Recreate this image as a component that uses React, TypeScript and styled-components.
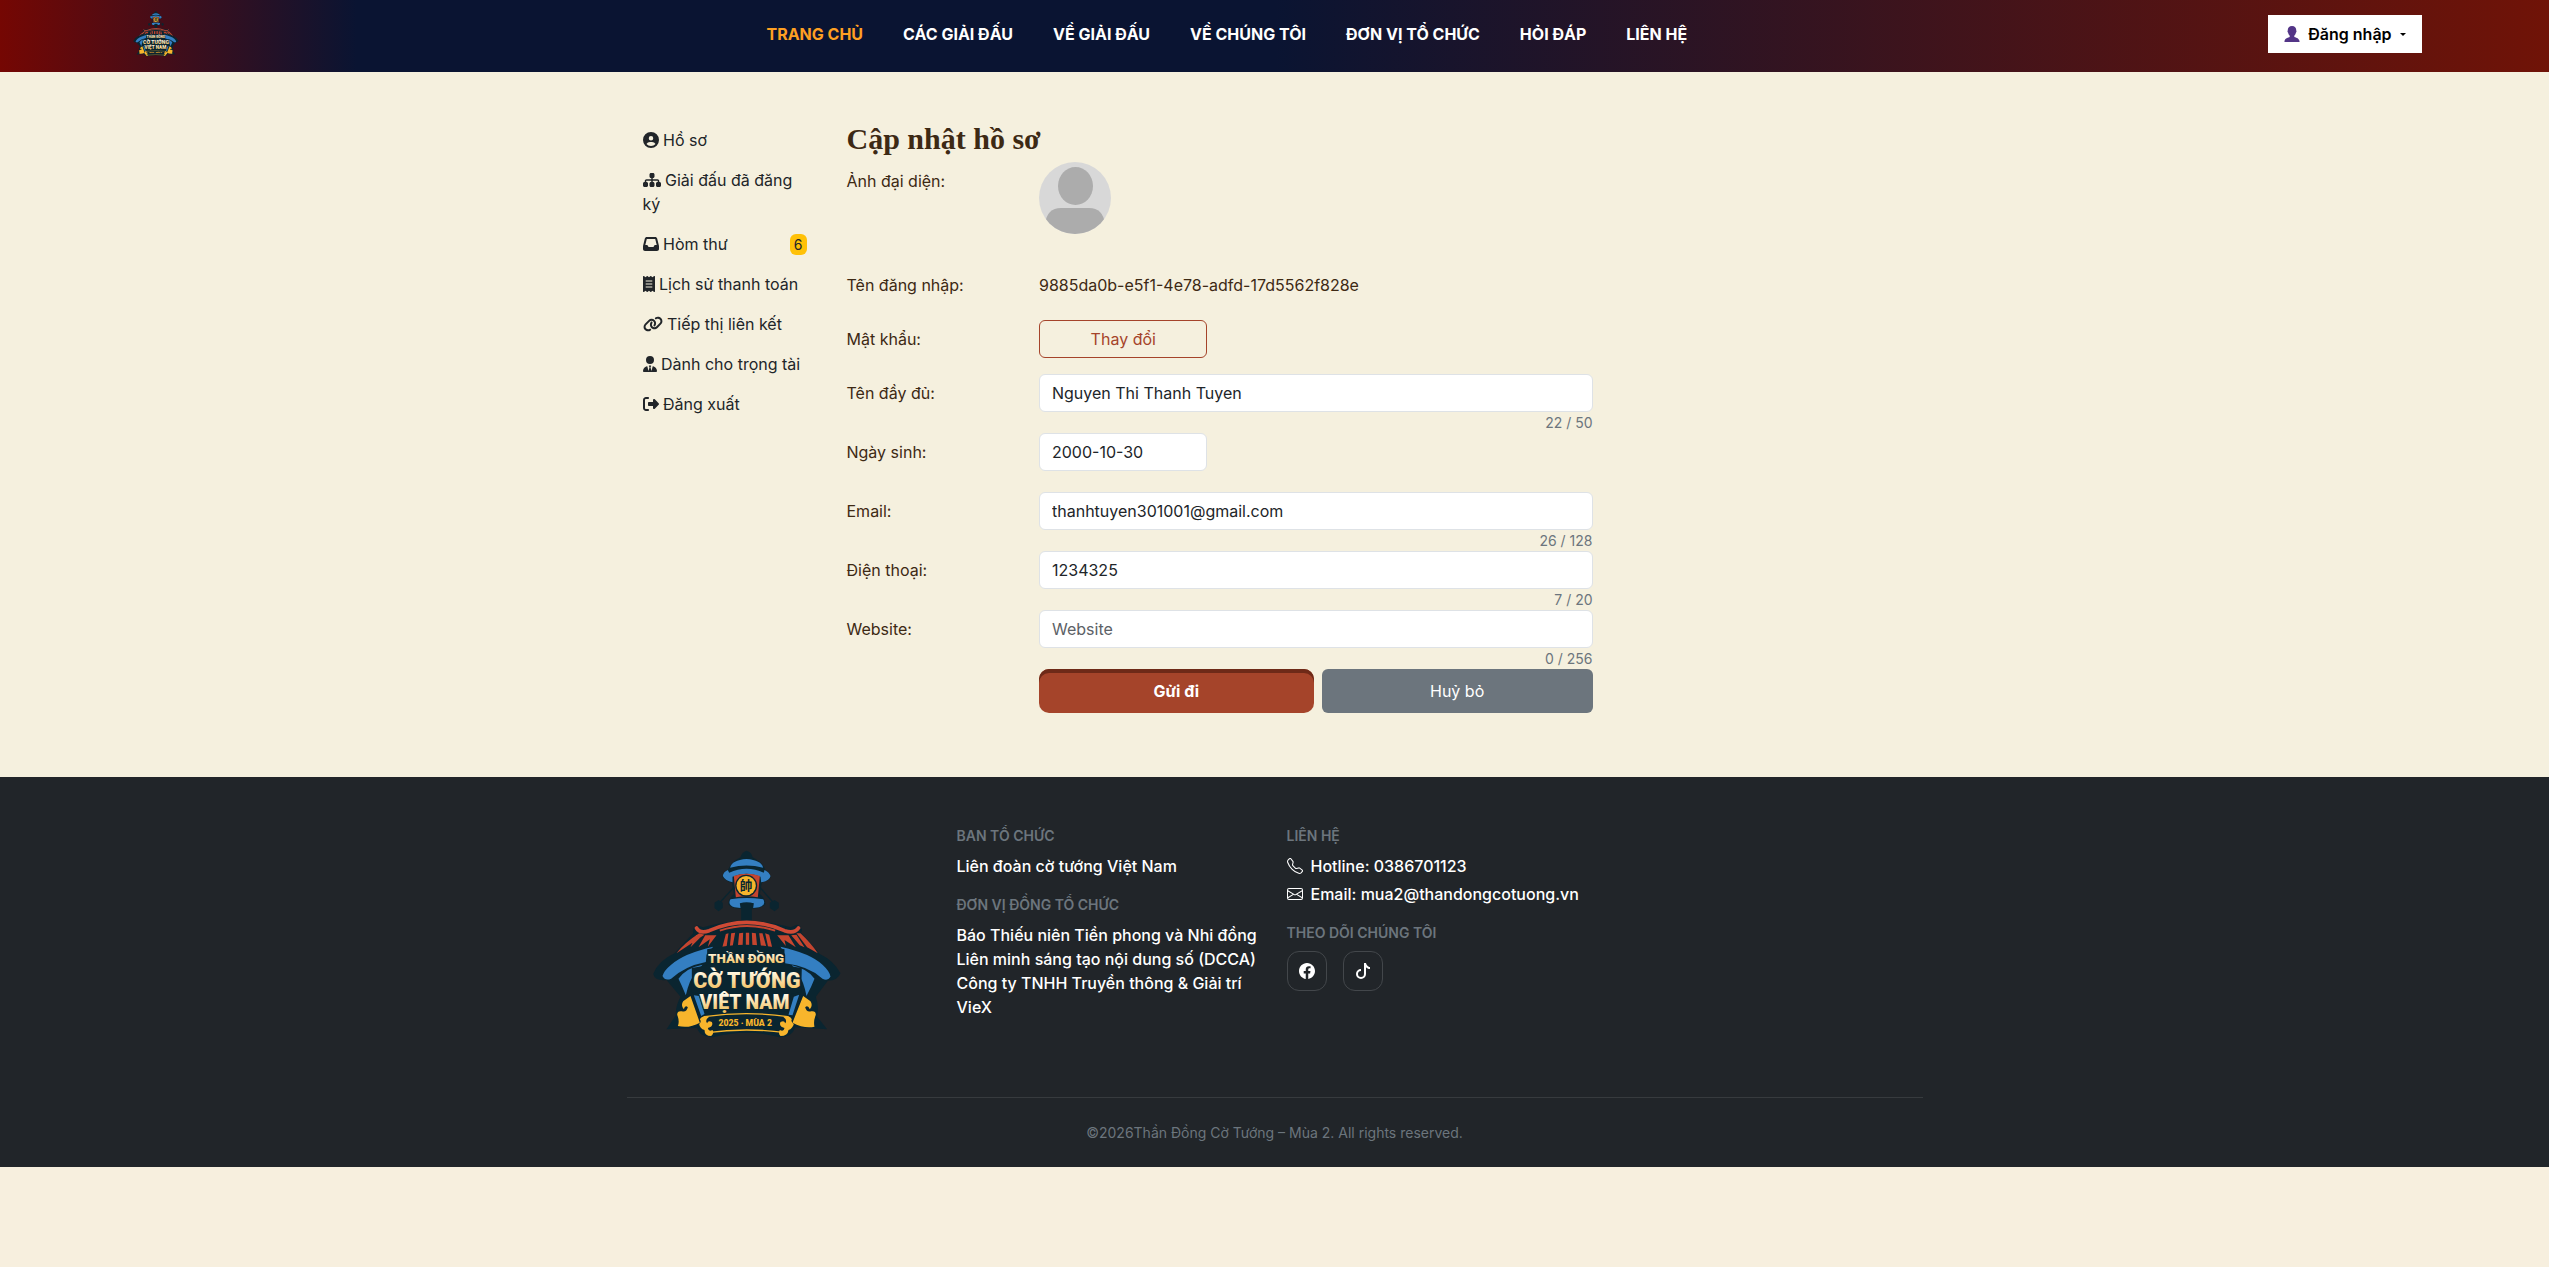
import React, { useState } from "react";
import styled, { createGlobalStyle } from "styled-components";
import {
  FaCircleUser,
  FaSitemap,
  FaInbox,
  FaReceipt,
  FaLink,
  FaUserTie,
  FaRightFromBracket,
} from "react-icons/fa6";
import { BsTelephone, BsEnvelope, BsFacebook, BsTiktok } from "react-icons/bs";

const GlobalStyle = createGlobalStyle`
  *, *::before, *::after { box-sizing: border-box; }
  body {
    margin: 0;
    background: #f7efde;
    color: #3d2914;
    font-family: Inter, "Noto Sans", sans-serif;
    font-size: 16px;
    line-height: 24px;
  }
  a { color: inherit; text-decoration: none; }
  button, input { font: inherit; }
`;

const Header = styled.header`
  display: flex;
  align-items: center;
  justify-content: space-between;
  height: 72px;
  padding: 0 5%;
  background: linear-gradient(90deg, #750703 0%, #0a1432 14%, #0a1432 50%, #701307 100%);
`;

const Brand = styled.a`
  display: flex;
`;

const HeaderBrand = styled(Brand)`
  padding-bottom: 4px;
`;

const Menu = styled.nav`
  display: flex;
  gap: 40px;
  padding-bottom: 4px;
`;

const MenuLink = styled.a<{ $active?: boolean }>`
  color: ${(p) => (p.$active ? "#ffa022" : "#fff")};
  font-size: 16px;
  font-weight: 700;
  white-space: nowrap;
`;

const LoginButton = styled.button`
  display: flex;
  align-items: center;
  gap: 8px;
  height: 38px;
  margin-bottom: 4px;
  padding: 0 16px;
  border: 0;
  background: #fff;
  color: #000;
  font-weight: 600;
`;

const Caret = styled.span`
  border: 3px solid transparent;
  border-top-color: #000;
  border-bottom: 0;
`;

const Container = styled.div`
  width: 100%;
  max-width: 1320px;
  margin: 0 auto;
  padding: 0 12px;
`;

const PageBackground = styled.div`
  background: #f5f0de;
`;

const Page = styled(Container)`
  display: grid;
  grid-template-columns: 2fr 10fr;
  padding: 48px 0 64px;
`;

const Sidebar = styled.nav`
  padding: 0 12px;
`;

const SideLink = styled.a<{ $iconWidth: number }>`
  display: block;
  padding: 8px 16px;
  color: #212529;

  svg {
    width: ${(p) => p.$iconWidth}px;
    height: 16px;
    vertical-align: -2px;
  }
`;

const Badge = styled.span`
  float: right;
  margin-top: 2px;
  padding: 0 4px;
  border-radius: 6px;
  background: #ffc107;
  font-size: 14px;
  line-height: 21px;
`;

const Content = styled.main`
  width: 70%;
  padding: 0 12px;
`;

const Title = styled.h1`
  margin: 0 0 4px;
  color: #3d2914;
  font-family: "Liberation Serif", serif;
  font-size: 30px;
  font-weight: 700;
  line-height: 38px;
`;

const Row = styled.div<{ $gap?: number }>`
  display: grid;
  grid-template-columns: 1fr 3fr;
  margin: 0 -12px ${(p) => p.$gap ?? 0}px;
`;

const Label = styled.label`
  padding: 7px 12px;
`;

const Caption = styled(Label).attrs({ as: "span" })``;

const Field = styled.div`
  min-width: 0;
  padding: 0 12px;
`;

const Plain = styled.div`
  padding: 7px 0;
`;

const Avatar = styled.svg`
  display: block;
  width: 72px;
  height: 72px;
  border-radius: 50%;
`;

const Third = styled.div`
  width: calc(33.333% - 16px);
`;

const Input = styled.input`
  display: block;
  width: 100%;
  height: 38px;
  padding: 6px 12px;
  border: 1px solid #dee2e6;
  border-radius: 6px;
  background: #fff;
  color: #212529;

  &::placeholder {
    color: #5c6166;
    opacity: 1;
  }
`;

const Counter = styled.div`
  height: 21px;
  color: #6c757d;
  font-size: 14px;
  line-height: 21px;
  text-align: right;
`;

const OutlineButton = styled.button`
  width: 100%;
  height: 38px;
  border: 1px solid #a5442a;
  border-radius: 6px;
  background: transparent;
  color: #a5442a;
`;

const Actions = styled.div`
  display: flex;
  gap: 8px;
`;

const ActionButton = styled.button<{ $primary?: boolean }>`
  flex: 1;
  height: 44px;
  padding: 0 ${(p) => (p.$primary ? 14 : 12)}px;
  border: 0;
  border-radius: ${(p) => (p.$primary ? 10 : 6)}px;
  background: ${(p) => (p.$primary ? "#a5442a" : "#6c757d")};
  box-shadow: ${(p) => (p.$primary ? "inset 0 4px 0 #6e2a18" : "none")};
  color: #fff;
  font-weight: ${(p) => (p.$primary ? 700 : 400)};
`;

const Footer = styled.footer`
  padding-top: 48px;
  background: #212529;
  color: #fff;
  font-weight: 500;
`;

const FooterColumns = styled.div`
  display: grid;
  grid-template-columns: repeat(4, 1fr);
  margin: 0 -12px;
  padding-bottom: 32px;
`;

const FooterColumn = styled.section`
  padding: 0 12px;
`;

const FooterHeading = styled.h2`
  margin: 0 0 8px;
  color: #6c757d;
  font-size: 14px;
  font-weight: 600;
  line-height: 21px;
  text-transform: uppercase;
`;

const FooterText = styled.p`
  margin: 0 0 16px;
`;

const ContactList = styled.address`
  display: grid;
  gap: 4px;
  margin-bottom: 16px;
  font-style: normal;
`;

const ContactLink = styled.a`
  display: flex;
  align-items: center;
  gap: 8px;
`;

const Socials = styled.div`
  display: flex;
  gap: 16px;
`;

const SocialLink = styled.a`
  display: flex;
  align-items: center;
  justify-content: center;
  width: 40px;
  height: 40px;
  border: 1px solid #43474b;
  border-radius: 12px;
`;

const Copyright = styled.p`
  margin: 0;
  padding: 24px 0;
  border-top: 1px solid #373b3e;
  color: #6c757d;
  font-size: 14px;
  font-weight: 400;
  line-height: 21px;
  text-align: center;
`;

const logoFont = 'Roboto, "Liberation Sans", sans-serif';

function Logo({ size }: { size: number }) {
  const id = `gold${size}`;
  return (
    <svg width={size} height={size} viewBox="0 0 240 240" role="img" aria-label="Thần Đồng Cờ Tướng Việt Nam">
      <defs>
        <linearGradient id={id} x1="0" y1="0" x2="0" y2="1">
          <stop offset="0.2" stopColor="#fff8e4" />
          <stop offset="0.9" stopColor="#f3bf5c" />
        </linearGradient>
      </defs>
      <g transform="translate(3.5 15) scale(0.33333)">
        <path
          fill="#0a2530"
          d="M348 32 Q364 36 366 52 Q398 68 406 92 Q424 102 418 118 Q400 126 394 128 L388 162 Q408 178 404 194 Q388 206 364 206 L364 242 Q440 250 480 262 L500 254 Q520 264 512 278 L568 342 Q610 362 630 400 Q622 422 592 422 L556 470 Q566 500 560 530 L590 568 L494 562 Q486 592 446 592 Q350 564 248 592 Q206 590 200 564 L108 568 L136 526 Q134 500 150 470 L108 420 Q74 424 68 402 Q84 362 132 340 L188 280 Q184 262 200 256 L218 262 Q260 248 332 242 L332 206 Q304 206 294 194 Q292 178 310 162 L304 128 Q284 122 276 110 Q278 96 292 90 Q304 64 330 52 Q334 36 348 32 Z"
        />
        <g stroke="#0a2530" strokeWidth="4">
          <path d="M310 142 L264 192 M388 142 L432 192" />
        </g>
        <path fill="#0a2530" d="M252 188 L264 180 L277 188 L277 204 L264 214 L252 204 Z M418 188 L432 180 L445 188 L445 204 L432 214 L418 204 Z" />
        <path fill="#347fc2" d="M299 83 Q304 60 348 57 Q392 60 398 83 Q348 70 299 83 Z" />
        <path fill="#347fc2" d="M292 90 Q278 96 277 108 Q284 122 306 127 L306 110 Q348 92 390 110 L392 127 Q418 122 420 108 Q416 96 402 90 L400 98 Q348 74 296 98 Z" />
        <path fill="#c5452f" d="M310 108 Q348 94 388 108 L382 172 Q348 166 316 172 Z" />
        <circle cx="347" cy="137" r="33" fill="#0a2530" />
        <circle cx="347" cy="137" r="29" fill="#f7b52c" />
        <text x="347" y="151" textAnchor="middle" fontSize="38" fontWeight="700" fontFamily='"Noto Sans CJK TC", sans-serif' fill="#0a2530">帥</text>
        <path fill="#347fc2" d="M300 178 Q290 194 312 202 L330 204 L328 190 Q348 184 370 190 L368 204 L386 202 Q408 194 398 178 Q348 170 300 178 Z" />
        <path fill="none" stroke="#d04a35" strokeWidth="11" strokeLinecap="round" d="M198 264 Q208 282 236 272 Q348 222 462 272 Q492 282 504 264" />
        <path fill="none" stroke="#c5452f" strokeWidth="6" d="M268 272 Q348 244 434 272" />
        <path fill="#c5452f" d="M206 280 L222 284 L138 340 Q160 310 206 280 Z M224 286 L258 286 L232 320 L238 298 L204 322 Z M196 286 L214 288 L180 322 Z M286 282 L294 280 L288 322 L274 328 Z M302 280 L314 278 L306 322 L298 320 Z M326 280 L338 278 L336 326 L322 320 Z M346 278 L356 278 L356 324 L346 324 Z M364 278 L376 280 L380 320 L366 324 Z M386 280 L396 280 L408 322 L392 324 Z M404 280 L416 284 L426 326 L414 326 Z M440 286 L474 286 L496 322 L462 300 L466 318 Z M482 286 L498 284 L522 322 L508 316 Z M498 280 L510 280 Q542 310 562 340 L530 322 Z" />
        <path fill="#347fc2" d="M248 320 Q160 340 122 374 Q100 392 96 408 Q104 424 122 416 Q164 378 226 366 L228 344 Z M450 320 Q540 340 576 374 Q598 394 600 410 Q592 424 576 416 Q534 378 464 370 L464 344 Z" />
        <path fill="#347fc2" d="M216 374 Q166 384 144 416 Q154 436 166 466 Q176 420 196 396 Z M484 376 Q530 386 552 416 Q542 442 528 468 Q520 424 502 398 Z M190 466 L206 468 L222 522 L212 528 Z M506 464 L490 470 L474 524 L486 526 Z" />
        <path fill="#f7b52c" d="M180 468 L208 548 Q176 566 142 558 Q148 544 140 524 Q140 512 154 514 Q168 518 172 502 Q164 494 160 508 Q150 496 158 484 Z M518 468 L486 548 Q520 566 552 560 Q548 544 556 524 Q556 512 542 514 Q528 518 524 502 Q532 494 538 508 Q548 496 540 484 Z" />
        <path fill="#0a2530" stroke="#f7b52c" strokeWidth="4" d="M222 530 Q348 512 472 530 L466 578 Q348 562 230 578 Z" />
        <path fill="#f7b52c" d="M236 530 Q218 524 208 538 Q214 546 206 552 Q208 566 222 570 Q222 588 242 588 Q252 580 246 570 Q234 576 232 564 Q250 560 244 546 Q232 540 230 550 Q222 540 236 530 Z M458 530 Q476 524 484 538 Q480 546 490 552 Q486 566 474 570 Q472 588 450 588 Q442 580 448 570 Q460 576 462 564 Q444 560 450 546 Q462 540 464 550 Q472 540 458 530 Z" />
        <path fill="#0a2530" d="M230 328 Q348 300 462 328 L462 376 L514 384 L512 456 L482 462 L470 516 Q348 506 222 516 L206 462 L184 456 L184 384 L230 376 Z" />
        <g textAnchor="middle" fontFamily={logoFont} fontWeight="900" strokeLinejoin="round" paintOrder="stroke" stroke="#0a2530">
          <text x="347" y="368" fontSize="40" strokeWidth="6" fill={`url(#${id})`}>THẦN ĐỒNG</text>
          <text x="349" y="443" fontSize="64" strokeWidth="6" fill={`url(#${id})`}>CỜ TƯỚNG</text>
          <text x="342" y="506" fontSize="58" strokeWidth="6" fill={`url(#${id})`}>VIỆT NAM</text>
          <text x="344" y="557" fontSize="26" strokeWidth="1" fill="#f7b52c">2025 · MÙA 2</text>
        </g>
      </g>
    </svg>
  );
}

function UserBust() {
  return (
    <svg width="16" height="16" viewBox="0 0 16 16" aria-hidden="true">
      <path fill="#533587" d="M8 0 C11 0 12.4 2 12.2 4.6 C12.7 4.8 12.6 6.2 12 6.6 C11.6 8.2 11 9 10.3 9.7 L10.3 11 C13 11.8 15.5 12.6 15.6 16 L0.4 16 C0.5 12.6 3 11.8 5.7 11 L5.7 9.7 C5 9 4.4 8.2 4 6.6 C3.4 6.2 3.3 4.8 3.8 4.6 C3.6 2 5 0 8 0 Z" />
    </svg>
  );
}

const menu = ["Trang chủ", "Các giải đấu", "Về giải đấu", "Về chúng tôi", "Đơn vị tổ chức", "Hỏi đáp", "Liên hệ"];

const sideLinks = [
  { icon: FaCircleUser, width: 16, text: "Hồ sơ" },
  { icon: FaSitemap, width: 18, text: "Giải đấu đã đăng ký" },
  { icon: FaInbox, width: 16, text: "Hòm thư", badge: 6 },
  { icon: FaReceipt, width: 12, text: "Lịch sử thanh toán" },
  { icon: FaLink, width: 20, text: "Tiếp thị liên kết" },
  { icon: FaUserTie, width: 14, text: "Dành cho trọng tài" },
  { icon: FaRightFromBracket, width: 16, text: "Đăng xuất" },
];

type TextRowProps = {
  id: string;
  label: string;
  initial: string;
  max: number;
  type?: string;
  placeholder?: string;
};

function TextRow({ id, label, initial, max, type = "text", placeholder }: TextRowProps) {
  const [value, setValue] = useState(initial);
  return (
    <Row>
      <Label htmlFor={id}>{label}</Label>
      <Field>
        <Input
          id={id}
          type={type}
          value={value}
          maxLength={max}
          placeholder={placeholder}
          onChange={(e) => setValue(e.target.value)}
        />
        <Counter>
          {value.length} / {max}
        </Counter>
      </Field>
    </Row>
  );
}

export default function App() {
  return (
    <>
      <GlobalStyle />
      <Header>
        <HeaderBrand href="#">
          <Logo size={58} />
        </HeaderBrand>
        <Menu>
          {menu.map((item, i) => (
            <MenuLink key={item} href="#" $active={i === 0}>
              {item.toUpperCase()}
            </MenuLink>
          ))}
        </Menu>
        <LoginButton type="button">
          <UserBust />
          Đăng nhập
          <Caret />
        </LoginButton>
      </Header>

      <PageBackground>
        <Page>
          <Sidebar>
            {sideLinks.map(({ icon: Icon, width, text, badge }) => (
              <SideLink key={text} href="#" $iconWidth={width}>
                <Icon /> {text}
                {badge && <Badge>{badge}</Badge>}
              </SideLink>
            ))}
          </Sidebar>
          <Content>
            <Title>Cập nhật hồ sơ</Title>
            <form onSubmit={(e) => e.preventDefault()}>
              <Row $gap={32}>
                <Caption>Ảnh đại diện:</Caption>
                <Field>
                  <Avatar viewBox="0 0 72 72" role="img" aria-label="Ảnh đại diện">
                    <rect width="72" height="72" fill="#d8d8d8" />
                    <ellipse cx="36.5" cy="24" rx="17.5" ry="19" fill="#acacac" />
                    <path d="M6 72 V62 Q8 46 22 46 H50 Q64 46 66 62 V72 Z" fill="#acacac" />
                  </Avatar>
                </Field>
              </Row>
              <Row $gap={16}>
                <Caption>Tên đăng nhập:</Caption>
                <Field>
                  <Plain>9885da0b-e5f1-4e78-adfd-17d5562f828e</Plain>
                </Field>
              </Row>
              <Row $gap={16}>
                <Caption>Mật khẩu:</Caption>
                <Field>
                  <Third>
                    <OutlineButton type="button">Thay đổi</OutlineButton>
                  </Third>
                </Field>
              </Row>
              <TextRow id="name" label="Tên đầy đủ:" initial="Nguyen Thi Thanh Tuyen" max={50} />
              <Row $gap={21}>
                <Label htmlFor="birthday">Ngày sinh:</Label>
                <Field>
                  <Third>
                    <Input id="birthday" defaultValue="2000-10-30" />
                  </Third>
                </Field>
              </Row>
              <TextRow id="email" label="Email:" initial="thanhtuyen301001@gmail.com" max={128} type="email" />
              <TextRow id="phone" label="Điện thoại:" initial="1234325" max={20} type="tel" />
              <TextRow id="website" label="Website:" initial="" max={256} placeholder="Website" />
              <Row>
                <span />
                <Field>
                  <Actions>
                    <ActionButton type="submit" $primary>
                      Gửi đi
                    </ActionButton>
                    <ActionButton type="button">Huỷ bỏ</ActionButton>
                  </Actions>
                </Field>
              </Row>
            </form>
          </Content>
        </Page>
      </PageBackground>

      <Footer>
        <Container>
          <FooterColumns>
            <FooterColumn>
              <Brand href="#">
                <Logo size={240} />
              </Brand>
            </FooterColumn>
            <FooterColumn>
              <FooterHeading>Ban tổ chức</FooterHeading>
              <FooterText>Liên đoàn cờ tướng Việt Nam</FooterText>
              <FooterHeading>Đơn vị đồng tổ chức</FooterHeading>
              <FooterText>
                Báo Thiếu niên Tiền phong và Nhi đồng
                <br />
                Liên minh sáng tạo nội dung số (DCCA)
                <br />
                Công ty TNHH Truyền thông &amp; Giải trí VieX
              </FooterText>
            </FooterColumn>
            <FooterColumn>
              <FooterHeading>Liên hệ</FooterHeading>
              <ContactList>
                <ContactLink href="#">
                  <BsTelephone /> Hotline: 0386701123
                </ContactLink>
                <ContactLink href="#">
                  <BsEnvelope /> Email: mua2@thandongcotuong.vn
                </ContactLink>
              </ContactList>
              <FooterHeading>Theo dõi chúng tôi</FooterHeading>
              <Socials>
                <SocialLink href="#" aria-label="Facebook">
                  <BsFacebook />
                </SocialLink>
                <SocialLink href="#" aria-label="TikTok">
                  <BsTiktok />
                </SocialLink>
              </Socials>
            </FooterColumn>
          </FooterColumns>
          <Copyright>©2026Thần Đồng Cờ Tướng – Mùa 2. All rights reserved.</Copyright>
        </Container>
      </Footer>
    </>
  );
}
